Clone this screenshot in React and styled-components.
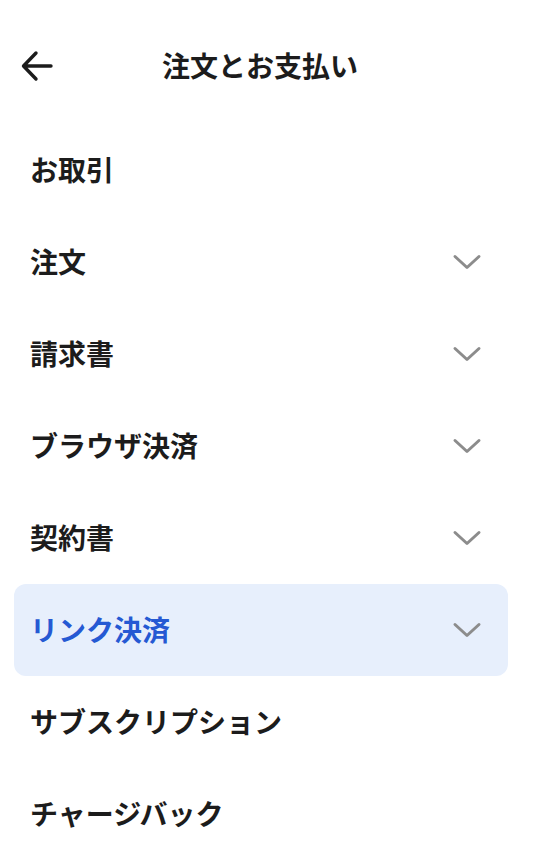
import React from 'react';
import styled, { createGlobalStyle } from 'styled-components';

const GlobalStyle = createGlobalStyle`
  html, body {
    margin: 0;
    padding: 0;
    background: #ffffff;
  }
  body {
    font-family: "Noto Sans CJK JP", "Noto Sans", sans-serif;
    -webkit-font-smoothing: antialiased;
  }
`;

const Screen = styled.div`
  width: 540px;
  min-height: 852px;
  background: #ffffff;
  display: flex;
  flex-direction: column;
`;

const Header = styled.header`
  position: relative;
  height: 92px;
  margin-top: 20px;
  padding-right: 20px;
  display: flex;
  align-items: center;
  justify-content: center;
`;

const BackButton = styled.button`
  position: absolute;
  left: 18px;
  top: 50%;
  transform: translateY(-50%);
  border: none;
  background: none;
  padding: 0;
  width: 38px;
  height: 38px;
  display: flex;
  align-items: center;
  justify-content: center;
  cursor: pointer;
`;

const Title = styled.h1`
  margin: 0 0 2px;
  font-size: 28px;
  font-weight: 700;
  color: #1c1c1c;
`;

const List = styled.nav`
  display: flex;
  flex-direction: column;
  padding: 12px 32px 0 14px;
`;

const Row = styled.div`
  height: 92px;
  display: flex;
  align-items: center;
  justify-content: space-between;
  padding: 0 26px 0 16px;
  border-radius: 12px;
  background: ${p => (p.$active ? '#e7effc' : 'transparent')};
`;

const Label = styled.span`
  font-size: 28px;
  font-weight: 700;
  line-height: 1;
  margin-bottom: 3px;
  color: ${p => (p.$active ? '#2559d3' : '#1c1c1c')};
`;

const Chevron = () => (
  <svg width="30" height="18" viewBox="0 0 30 18" fill="none">
    <path d="M3 3.5 L15 14.5 L27 3.5" stroke="#8c8c8c" strokeWidth="3" strokeLinecap="round" strokeLinejoin="round" />
  </svg>
);

const BackArrow = () => (
  <svg width="34" height="34" viewBox="0 0 34 34" fill="none">
    <path d="M31 17 H4 M16 4 L3.5 17 L16 30" stroke="#1c1c1c" strokeWidth="3.4" strokeLinecap="round" strokeLinejoin="round" />
  </svg>
);

const items = [
  { label: 'お取引', expandable: false },
  { label: '注文', expandable: true },
  { label: '請求書', expandable: true },
  { label: 'ブラウザ決済', expandable: true },
  { label: '契約書', expandable: true },
  { label: 'リンク決済', expandable: true, active: true },
  { label: 'サブスクリプション', expandable: false },
  { label: 'チャージバック', expandable: false },
];

export default function App() {
  return (
    <>
      <GlobalStyle />
      <Screen>
        <Header>
          <BackButton aria-label="戻る">
            <BackArrow />
          </BackButton>
          <Title>注文とお支払い</Title>
        </Header>
        <List>
          {items.map(item => (
            <Row key={item.label} $active={item.active}>
              <Label $active={item.active}>{item.label}</Label>
              {item.expandable && <Chevron />}
            </Row>
          ))}
        </List>
      </Screen>
    </>
  );
}
